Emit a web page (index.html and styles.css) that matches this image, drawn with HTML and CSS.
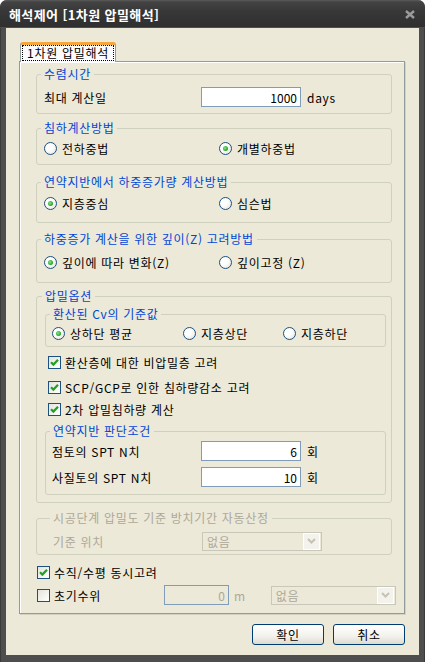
FILE: index.html
```html
<!DOCTYPE html>
<html lang="ko">
<head>
    <meta charset="UTF-8">
    <title>해석제어 [1차원 압밀해석]</title>
    <link rel="stylesheet" href="styles.css">
</head>
<body>
    <div class="window">
        <div class="titlebar">
            <span class="title">해석제어 [1차원 압밀해석]</span>
            <svg class="close" width="10" height="9" viewBox="0 0 10 9">
                <path d="M1 1 L9 8 M9 1 L1 8" stroke="#9a9a9a" stroke-width="2.4" fill="none"/>
            </svg>
        </div>
        <div class="frame">
            <div class="client">
                <div class="tabs">
                    <div class="tab"><span class="tab-label">1차원 압밀해석</span></div>
                </div>
                <div class="panel">
                    <!-- 수렴시간 -->
                    <fieldset class="group g1">
                        <legend>수렴시간</legend>
                        <div class="row">
                            <span class="label lbl-wide">최대 계산일</span>
                            <input class="textbox" type="text" value="1000">
                            <span class="unit">days</span>
                        </div>
                    </fieldset>

                    <!-- 침하계산방법 -->
                    <fieldset class="group g2">
                        <legend>침하계산방법</legend>
                        <div class="row">
                            <span class="opt col-a"><span class="radio"></span>전하중법</span>
                            <span class="opt"><span class="radio on"></span>개별하중법</span>
                        </div>
                    </fieldset>

                    <fieldset class="group g3">
                        <legend>연약지반에서 하중증가량 계산방법</legend>
                        <div class="row">
                            <span class="opt col-a"><span class="radio on"></span>지층중심</span>
                            <span class="opt"><span class="radio"></span>심슨법</span>
                        </div>
                    </fieldset>

                    <fieldset class="group g4">
                        <legend>하중증가 계산을 위한 깊이(Z) 고려방법</legend>
                        <div class="row">
                            <span class="opt col-a"><span class="radio on"></span>깊이에 따라 변화(Z)</span>
                            <span class="opt"><span class="radio"></span>깊이고정 (Z)</span>
                        </div>
                    </fieldset>

                    <!-- 압밀옵션 -->
                    <fieldset class="group g5">
                        <legend>압밀옵션</legend>
                        <fieldset class="group inner cv">
                            <legend>환산된 Cv의 기준값</legend>
                            <div class="row">
                                <span class="opt col-b"><span class="radio on"></span>상하단 평균</span>
                                <span class="opt col-c"><span class="radio"></span>지층상단</span>
                                <span class="opt"><span class="radio"></span>지층하단</span>
                            </div>
                        </fieldset>
                        <div class="check-row c1"><span class="check on"><svg width="11" height="11" viewBox="0 0 11 11"><path d="M2 5.2 L4.4 7.6 L9 2.8" stroke="#21a121" stroke-width="2.2" fill="none"/></svg></span>환산층에 대한 비압밀층 고려</div>
                        <div class="check-row c2"><span class="check on"><svg width="11" height="11" viewBox="0 0 11 11"><path d="M2 5.2 L4.4 7.6 L9 2.8" stroke="#21a121" stroke-width="2.2" fill="none"/></svg></span>SCP/GCP로 인한 침하량감소 고려</div>
                        <div class="check-row c3"><span class="check on"><svg width="11" height="11" viewBox="0 0 11 11"><path d="M2 5.2 L4.4 7.6 L9 2.8" stroke="#21a121" stroke-width="2.2" fill="none"/></svg></span>2차 압밀침하량 계산</div>
                        <fieldset class="group inner soft">
                            <legend>연약지반 판단조건</legend>
                            <div class="row">
                                <span class="label lbl-inner">점토의 SPT N치</span>
                                <input class="textbox" type="text" value="6">
                                <span class="unit">회</span>
                            </div>
                            <div class="row row-gap">
                                <span class="label lbl-inner">사질토의 SPT N치</span>
                                <input class="textbox" type="text" value="10">
                                <span class="unit">회</span>
                            </div>
                        </fieldset>
                    </fieldset>

                    <!-- 시공단계 -->
                    <fieldset class="group g6 disabled">
                        <legend>시공단계 압밀도 기준 방치기간 자동산정</legend>
                        <div class="row">
                            <span class="label lbl-inner dim">기준 위치</span>
                            <span class="combo combo-a"><span class="combo-text">없음</span><span class="combo-btn"><svg width="9" height="6" viewBox="0 0 9 6"><path d="M1 1 L4.5 4.5 L8 1" stroke="#c4c2b4" stroke-width="2" fill="none"/></svg></span></span>
                        </div>
                    </fieldset>

                    <div class="check-row c4"><span class="check on"><svg width="11" height="11" viewBox="0 0 11 11"><path d="M2 5.2 L4.4 7.6 L9 2.8" stroke="#21a121" stroke-width="2.2" fill="none"/></svg></span>수직/수평 동시고려</div>
                    <div class="check-row c5">
                        <span class="check"></span><span class="lbl-water">초기수위</span>
                        <input class="textbox small" type="text" value="0" disabled>
                        <span class="unit dim">m</span>
                        <span class="combo combo-b"><span class="combo-text">없음</span><span class="combo-btn"><svg width="9" height="6" viewBox="0 0 9 6"><path d="M1 1 L4.5 4.5 L8 1" stroke="#c4c2b4" stroke-width="2" fill="none"/></svg></span></span>
                    </div>
                </div>

                <div class="buttons">
                    <button type="button" class="btn">확인</button>
                    <button type="button" class="btn">취소</button>
                </div>
            </div>
        </div>
    </div>
</body>
</html>
```

FILE: styles.css
```css
/* 창 전체 */
body {
    margin: 0;
    background: #fff;
    font-family: "Noto Sans CJK KR", "Noto Sans", sans-serif;
    font-size: 12px;
    letter-spacing: 0.7px;
    color: #000;
}

.window {
    width: 425px;
    height: 662px;
    display: flex;
    flex-direction: column;
    background: #4a4a4a;
    border-radius: 7px 7px 0 0;
    overflow: hidden;
}

/* 타이틀바 */
.titlebar {
    height: 28px;
    flex: none;
    display: flex;
    align-items: center;
    justify-content: space-between;
    padding: 0 10px 0 9px;
    background: linear-gradient(#5c5c5c 0, #434343 2px, #383838 40%, #2f2f2f 100%);
    border-bottom: 1px solid #4f4f4f;
    box-sizing: border-box;
}

.title {
    color: #fff;
    font-weight: bold;
    font-size: 13px;
    letter-spacing: 0.4px;
    line-height: 16px;
    padding-top: 2px;
}

.close {
    margin-top: 1px;
}

.frame {
    flex: 1;
    padding: 0 6px 7px 6px;
    background: #4e4e4e;
    box-shadow: inset 1px 0 #3a3a3a, inset -1px 0 #3a3a3a;
}

.client {
    height: 100%;
    background: #ece9d8;
    padding: 14px 14px 0 13px;
    box-sizing: border-box;
}

/* 탭 */
.tabs {
    height: 19px;
    display: flex;
}

.tab {
    position: relative;
    z-index: 1;
    margin-left: 1px;
    width: 96px;
    height: 20px;
    box-sizing: border-box;
    background: #fcfcfe;
    border: 1px solid #919b9c;
    border-top: 3px solid #f5a73a;
    border-bottom: none;
    border-radius: 3px 3px 0 0;
    padding: 0 1px;
}

.tab-label {
    display: block;
    height: 16px;
    line-height: 15px;
    text-align: center;
    outline: 1px dotted #000;
    outline-offset: -1px;
}

.panel {
    border: 1px solid #919b9c;
    box-shadow: inset 1px 1px #fff, 1px 1px #d5d2c2;
    padding: 5px 12px 8px 16px;
}

/* 그룹박스 */
.group {
    margin: 0;
    padding: 0 5px 0 7px;
    border: 1px solid #d0d0bf;
    border-radius: 3px;
    min-inline-size: 0;
}

.group legend {
    color: #0046d5;
    line-height: 14px;
    padding: 0 3px;
    margin-left: -3px;
}

.group.disabled legend {
    color: #aca899;
}

.g1 { padding-top: 6px; padding-bottom: 6px; }
.g2 { margin-top: 7px; padding-top: 3px; padding-bottom: 6px; }
.g3 { margin-top: 10px; padding-top: 4px; padding-bottom: 9px; }
.g4 { margin-top: 9px; padding-top: 6px; padding-bottom: 10px; }
.g5 { margin-top: 6px; padding: 4px 5px 7px 8px; }
.g6 { margin-top: 8px; padding: 6px 5px 3px 16px; }

.inner {
    padding-left: 6px;
}

.inner legend {
    margin-left: -2px;
}

.cv { padding-top: 2px; padding-bottom: 3px; }
.soft { margin-top: 4px; padding-top: 3px; padding-bottom: 7px; }

/* 행 */
.row {
    display: flex;
    align-items: center;
    height: 20px;
}

.row-gap {
    margin-top: 6px;
}

.label {
    flex: none;
}

.label.dim {
    color: #aca899;
}

.lbl-wide { width: 157px; }
.lbl-inner { width: 149px; }

.textbox {
    width: 100px;
    height: 20px;
    box-sizing: border-box;
    border: 1px solid #7f9db9;
    background: #fff;
    font: 12px "Noto Sans CJK KR", "Noto Sans", sans-serif;
    text-align: right;
    padding: 0 3px 0 0;
    margin: 0;
    color: #000;
    flex: none;
}

.textbox.small {
    width: 65px;
}

.textbox:disabled {
    background: #ece9d8;
    color: #aca899;
}

.unit {
    margin-left: 6px;
    flex: none;
}

.unit.dim {
    margin-left: 5px;
    color: #aca899;
}

/* 라디오 / 체크박스 */
.opt {
    display: flex;
    align-items: center;
    gap: 5px;
    flex: none;
}

.col-a { width: 175px; }
.col-b { width: 131px; }
.col-c { width: 100px; }

.radio {
    width: 13px;
    height: 13px;
    box-sizing: border-box;
    border: 1px solid #1c5180;
    border-radius: 50%;
    background: radial-gradient(circle at 35% 35%, #fff 35%, #e0ded4 100%);
    position: relative;
}

.radio.on::after {
    content: '';
    position: absolute;
    left: 3px;
    top: 3px;
    width: 5px;
    height: 5px;
    border-radius: 50%;
    background: radial-gradient(circle at 40% 40%, #8ee28e 0, #21a121 70%);
}

.check-row {
    display: flex;
    align-items: center;
    height: 22px;
    gap: 4px;
    white-space: nowrap;
}

.c1 { margin-top: 4px; margin-left: 3px; }
.c2 { margin-top: 3px; margin-left: 3px; }
.c3 { margin-left: 3px; }
.c4 { margin-top: 7px; height: 20px; margin-left: 1px; }
.c5 { margin-top: 3px; height: 20px; margin-left: 1px; gap: 0; }

.check {
    width: 13px;
    height: 13px;
    box-sizing: border-box;
    border: 1px solid #1c5180;
    background: linear-gradient(135deg, #e4e3dc, #fff);
    display: flex;
    align-items: center;
    justify-content: center;
    flex: none;
}

.lbl-water {
    flex: none;
    width: 110px;
    margin-left: 4px;
}

/* 콤보박스 */
.combo {
    display: flex;
    align-items: center;
    height: 19px;
    box-sizing: border-box;
    border: 1px solid #c9c7ba;
    background: #ece9d8;
    color: #aca899;
    flex: none;
}

.combo-a { width: 120px; }
.combo-b { width: 125px; margin-left: 25px; }

.combo-text {
    flex: 1;
    padding-left: 4px;
}

.combo-btn {
    width: 15px;
    height: 15px;
    margin-right: 1px;
    background: #f3f2ec;
    border: 1px solid #fff;
    display: flex;
    align-items: center;
    justify-content: center;
}

/* 버튼 */
.buttons {
    display: flex;
    justify-content: flex-end;
    gap: 9px;
    margin-top: 10px;
}

.btn {
    width: 72px;
    height: 21px;
    border: 1px solid #003c74;
    border-radius: 3px;
    background: linear-gradient(#fff, #f2f1ec 60%, #dedbce);
    font: 12px "Noto Sans CJK KR", "Noto Sans", sans-serif;
    letter-spacing: 0.7px;
    color: #000;
    padding: 0;
}
```
